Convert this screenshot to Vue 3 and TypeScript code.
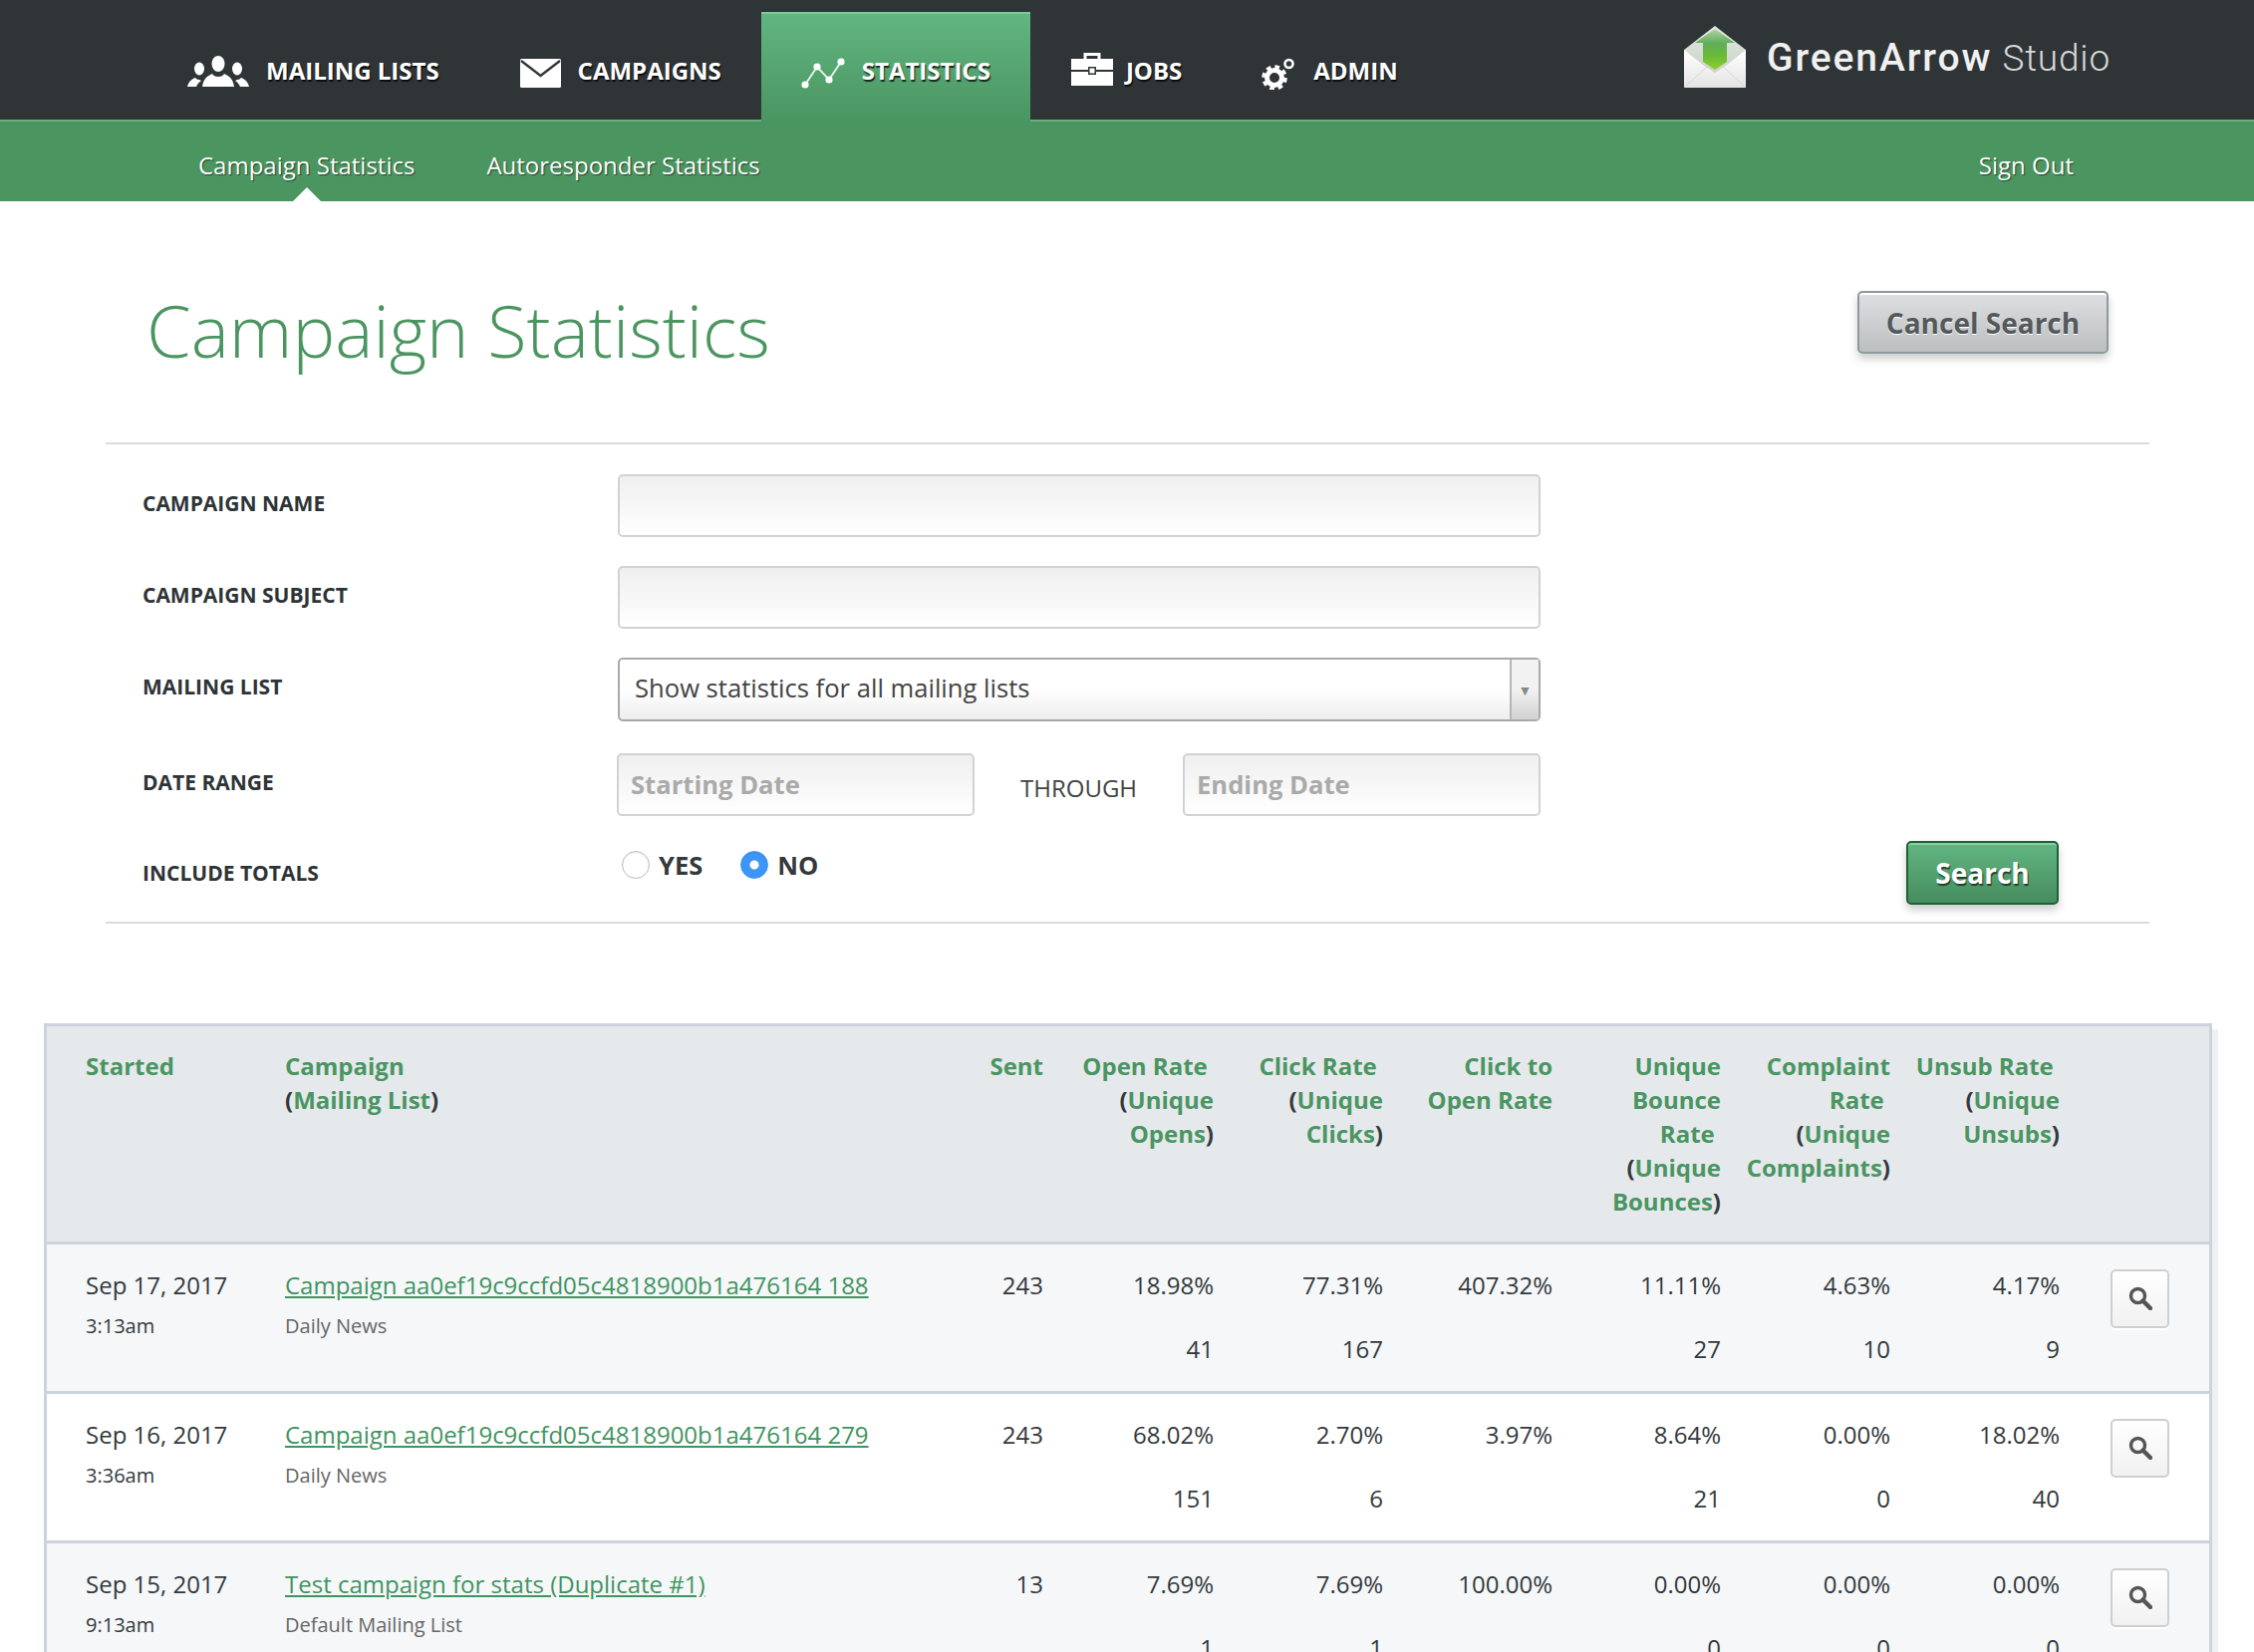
<script setup lang="ts">
interface Row {
  date: string; time: string; name: string; list: string; sent: string;
  rates: { pct: string; num: string }[];
}
const navItems = [
  { label: 'MAILING LISTS', icon: 'people', active: false },
  { label: 'CAMPAIGNS', icon: 'mail', active: false },
  { label: 'STATISTICS', icon: 'stats', active: true },
  { label: 'JOBS', icon: 'jobs', active: false },
  { label: 'ADMIN', icon: 'gear', active: false },
];
const rows: Row[] = [
  { date: 'Sep 17, 2017', time: '3:13am', name: 'Campaign aa0ef19c9ccfd05c4818900b1a476164 188', list: 'Daily News', sent: '243',
    rates: [{ pct: '18.98%', num: '41' }, { pct: '77.31%', num: '167' }, { pct: '407.32%', num: '' }, { pct: '11.11%', num: '27' }, { pct: '4.63%', num: '10' }, { pct: '4.17%', num: '9' }] },
  { date: 'Sep 16, 2017', time: '3:36am', name: 'Campaign aa0ef19c9ccfd05c4818900b1a476164 279', list: 'Daily News', sent: '243',
    rates: [{ pct: '68.02%', num: '151' }, { pct: '2.70%', num: '6' }, { pct: '3.97%', num: '' }, { pct: '8.64%', num: '21' }, { pct: '0.00%', num: '0' }, { pct: '18.02%', num: '40' }] },
  { date: 'Sep 15, 2017', time: '9:13am', name: 'Test campaign for stats (Duplicate #1)', list: 'Default Mailing List', sent: '13',
    rates: [{ pct: '7.69%', num: '1' }, { pct: '7.69%', num: '1' }, { pct: '100.00%', num: '' }, { pct: '0.00%', num: '0' }, { pct: '0.00%', num: '0' }, { pct: '0.00%', num: '0' }] },
];
</script>

<template>
  <div class="page">
    <header class="topbar">
      <nav class="mainnav">
        <a v-for="item in navItems" :key="item.label" class="navitem" :class="{ active: item.active }">
          <svg v-if="item.icon === 'people'" class="ico people" viewBox="0 0 62 32" fill="#fff">
            <ellipse cx="31" cy="8" rx="6.500" ry="8" />
            <path d="M15 31c1-6 3-10 10-13 1 2 3 3 6 3s5-1 6-3c7 3 9 7 10 13z" />
            <ellipse cx="12" cy="13" rx="5" ry="6.500" />
            <path d="M0 31c1-4 3-7 8-9 1 1 2 2 4 2l2 1c-3 2-4 4-5 6z" />
            <ellipse cx="50" cy="13" rx="5" ry="6.500" />
            <path d="M62 31c-1-4-3-7-8-9-1 1-2 2-4 2l-2 1c3 2 4 4 5 6z" />
          </svg>
          <svg v-else-if="item.icon === 'mail'" class="ico mail" viewBox="0 0 41 29">
            <rect x="0" y="0" width="41" height="29" rx="1.5" fill="#fff" />
            <path d="M1 2l19.5 15L40 2" fill="none" stroke="#30353a" stroke-width="2.4" />
          </svg>
          <svg v-else-if="item.icon === 'stats'" class="ico stats" viewBox="0 0 45 33" fill="#fff">
            <path d="M4 28L16 10l12 13L42 2" fill="none" stroke="#fff" stroke-opacity=".85" stroke-width="2" />
            <circle cx="4" cy="28" r="3.6" />
            <circle cx="16" cy="10" r="3.6" />
            <circle cx="28" cy="23" r="3.6" />
            <circle cx="40" cy="5" r="3.6" />
          </svg>
          <svg v-else-if="item.icon === 'jobs'" class="ico jobs" viewBox="0 0 42 33">
            <path d="M14 7V1.500h14V7" fill="none" stroke="#fff" stroke-width="3" />
            <path d="M0 6h42v11H25v-3h-8v3H0zM0 19h17v3h8v-3h17v14H0z" fill="#fff" />
            <rect x="18.500" y="15.500" width="5" height="5" fill="#fff" />
          </svg>
          <svg v-else class="ico gear" viewBox="0 0 34 32" fill="none" stroke="#fff">
            <circle cx="13" cy="20" r="7.500" stroke-width="5" />
            <circle cx="13" cy="20" r="11" stroke-width="3.500" stroke-dasharray="4.640 4" />
            <circle cx="27.500" cy="6" r="4" stroke-width="2.600" />
          </svg>
          <span class="navlabel">{{ item.label }}</span>
        </a>
      </nav>
      <div class="logo">
        <svg class="logomark" viewBox="0 0 62 62">
          <defs>
            <linearGradient id="flap" x1="0" y1="0" x2="0" y2="1">
              <stop offset="0" stop-color="#e2e8df" />
              <stop offset="1" stop-color="#c2cbbf" />
            </linearGradient>
            <linearGradient id="arrow" x1="0" y1="0" x2="0" y2="1">
              <stop offset="0" stop-color="#b4d2ab" />
              <stop offset=".35" stop-color="#5fae5a" />
              <stop offset=".65" stop-color="#68ba38" />
              <stop offset="1" stop-color="#8fd12c" />
            </linearGradient>
            <linearGradient id="front" x1="0" y1="0" x2="0" y2="1">
              <stop offset="0" stop-color="#ffffff" />
              <stop offset="1" stop-color="#e4e4e4" />
            </linearGradient>
          </defs>
          <path d="M31 0L62 24v38H0V24z" fill="url(#flap)" />
          <path d="M31 3L11 17h8v19l12 8 12-8V17h8z" fill="url(#arrow)" />
          <path d="M0 24l19 15 12 8 12-8 19-15v38H0z" fill="url(#front)" />
          <path d="M0 62l23-21M62 62L39 41" stroke="#d6d6d6" stroke-width="1" />
        </svg>
        <span class="logotext"><b>GreenArrow</b> <i>Studio</i></span>
      </div>
    </header>

    <div class="subnav">
      <a class="sublink current">Campaign Statistics</a>
      <a class="sublink">Autoresponder Statistics</a>
      <a class="sublink signout">Sign Out</a>
    </div>

    <div class="titlebar">
      <h1>Campaign Statistics</h1>
      <button class="btn-grey" type="button">Cancel Search</button>
    </div>

    <form class="form" @submit.prevent>
      <div class="frow r1">
        <label>CAMPAIGN NAME</label>
        <input class="field wide" type="text" />
      </div>
      <div class="frow r2">
        <label>CAMPAIGN SUBJECT</label>
        <input class="field wide" type="text" />
      </div>
      <div class="frow r3">
        <label>MAILING LIST</label>
        <div class="selectbox">
          <span>Show statistics for all mailing lists</span>
          <i class="selarrow">▼</i>
        </div>
      </div>
      <div class="frow r4">
        <label>DATE RANGE</label>
        <input class="field date" type="text" placeholder="Starting Date" />
        <span class="through">THROUGH</span>
        <input class="field date end" type="text" placeholder="Ending Date" />
      </div>
      <div class="frow r5">
        <label>INCLUDE TOTALS</label>
        <div class="radios">
          <input type="radio" name="totals" />
          <span>YES</span>
          <input type="radio" name="totals" checked />
          <span>NO</span>
        </div>
        <button class="btn-green" type="submit">Search</button>
      </div>
    </form>

    <div class="tablewrap">
      <table>
        <colgroup>
          <col class="c1" /><col class="c2" /><col class="c3" /><col class="c4" /><col class="c5" />
          <col class="c5" /><col class="c7" /><col class="c5" /><col class="c5" /><col class="c10" />
        </colgroup>
        <thead>
          <tr>
            <th class="first"><a>Started</a></th>
            <th><a>Campaign</a><br />(<a>Mailing List</a>)</th>
            <th class="num"><a>Sent</a></th>
            <th class="num"><a>Open Rate</a>&nbsp;<br />(<a>Unique<br />Opens</a>)</th>
            <th class="num"><a>Click Rate</a>&nbsp;<br />(<a>Unique<br />Clicks</a>)</th>
            <th class="num"><a>Click to<br />Open Rate</a></th>
            <th class="num"><a>Unique<br />Bounce<br />Rate</a>&nbsp;<br />(<a>Unique<br />Bounces</a>)</th>
            <th class="num"><a>Complaint<br />Rate</a>&nbsp;<br />(<a>Unique<br />Complaints</a>)</th>
            <th class="num"><a>Unsub Rate</a>&nbsp;<br />(<a>Unique<br />Unsubs</a>)</th>
            <th></th>
          </tr>
        </thead>
        <tbody>
          <tr v-for="row in rows" :key="row.name">
            <td class="first">
              <div>{{ row.date }}</div>
              <div class="small">{{ row.time }}</div>
            </td>
            <td>
              <div><a class="camp">{{ row.name }}</a></div>
              <div class="small muted">{{ row.list }}</div>
            </td>
            <td class="num">{{ row.sent }}</td>
            <td v-for="(r, i) in row.rates" :key="i" class="num">
              <div>{{ r.pct }}</div>
              <div v-if="r.num" class="count">{{ r.num }}</div>
            </td>
            <td class="act">
              <button class="lens" type="button" aria-label="View">
                <svg viewBox="0 0 24 24" width="24" height="24" fill="none" stroke="#555">
                  <circle cx="9.500" cy="9.500" r="7" stroke-width="3.400" />
                  <path d="M14.500 14.500L22 22" stroke-width="4.400" stroke-linecap="round" />
                </svg>
              </button>
            </td>
          </tr>
        </tbody>
      </table>
    </div>
  </div>
</template>

<style>
html, body { margin: 0; background: #fff; }
</style>

<style scoped>
.page {
  height: 100vh;
  overflow: hidden;
  font-family: "Open Sans", "Liberation Sans", sans-serif;
  font-size: 24px;
  color: #33393c;
  background: #fff;
}
.topbar {
  height: 120px;
  background: #2f3437;
  display: flex;
  justify-content: space-between;
  position: relative;
  z-index: 1;
}
.mainnav {
  display: flex;
  padding: 12px 0 0 148px;
}
.navitem {
  height: 110px;
  padding: 10px 40px 0;
  display: flex;
  align-items: center;
  box-sizing: border-box;
  color: #fff;
  font-weight: 700;
  font-size: 24px;
  text-shadow: 1px 2px 1px rgba(0, 0, 0, .75);
}
.navlabel { margin-top: -4px; }
.navitem.active {
  background: linear-gradient(#62b681, #4a9561);
  box-shadow: inset 0 2px 0 #82c89b;
}
.ico { flex: none; }
.people { width: 62px; height: 32px; margin-right: 17px; }
.mail { width: 41px; height: 29px; margin: 3px 17px 0 1px; }
.stats { width: 45px; height: 33px; margin: 3px 16px 0 0; }
.jobs { width: 42px; height: 33px; margin: -5px 13px 0 1px; }
.gear { width: 34px; height: 32px; margin: 3px 18px 0 0; }
.logo {
  display: flex;
  align-items: flex-start;
  padding: 26px 144px 0 0;
}
.logomark { width: 62px; height: 62px; margin-right: 21px; }
.logotext {
  font-family: Roboto, "Liberation Sans", sans-serif;
  font-size: 37px;
  line-height: 44px;
  margin-top: 10px;
  color: #f0f0f0;
  white-space: nowrap;
  letter-spacing: .8px;
}
.logotext b { font-weight: 500; font-size: 39px; letter-spacing: 1.9px; }
.logotext i { font-style: normal; font-weight: 300; color: #d8d8d8; }

.subnav {
  height: 82px;
  box-sizing: border-box;
  border-top: 2px solid #6dac84;
  background: #4b9560;
  display: flex;
  align-items: center;
  padding: 0 181px 0 199px;
  gap: 72px;
  color: #fff;
  text-shadow: 1px 1px 1px rgba(0, 0, 0, .55);
}
.sublink { position: relative; line-height: 34px; margin-top: 8px; }
.sublink.current::after {
  content: "";
  position: absolute;
  left: 50%;
  margin-left: -14px;
  bottom: -19px;
  border: solid transparent;
  border-width: 0 14px 14px;
  border-bottom-color: #fff;
}
.signout { margin-left: auto; }

.titlebar {
  display: flex;
  justify-content: space-between;
  align-items: flex-start;
  height: 242px;
  padding: 90px 146px 0 147px;
  box-sizing: border-box;
}
h1 {
  margin: -3px 0 0;
  font-size: 72px;
  line-height: 84px;
  font-weight: 300;
  color: #4b9560;
}
.btn-grey {
  width: 252px;
  height: 63px;
  border: 2px solid #8d9a9e;
  border-radius: 5px;
  background: linear-gradient(#dedfe2, #bcbfc0);
  box-shadow: inset 0 2px 0 #fff, 0 5px 8px rgba(0, 0, 0, .2);
  font: 700 28px "Open Sans", sans-serif;
  color: #54595c;
  text-shadow: 0 1px 0 #fff;
  padding: 0;
}
.form {
  margin: 0 105px 0 106px;
  border-top: 2px solid #dcdcdc;
  border-bottom: 2px solid #dcdcdc;
  padding: 30px 0 18px;
}
.frow {
  display: flex;
  align-items: center;
  height: 63px;
  position: relative;
}
.r2 { margin-top: 29px; }
.r3 { margin-top: 29px; height: 64px; }
.r4 { margin-top: 32px; }
.r5 { margin-top: 25px; }
label {
  width: 514px;
  flex: none;
  padding-left: 37px;
  box-sizing: border-box;
  font-size: 21px;
  font-weight: 700;
  color: #2e3436;
  margin-top: -6px;
}
.r5 label { margin-top: 0; }
.field {
  height: 63px;
  box-sizing: border-box;
  border: 2px solid #d2d2d2;
  border-radius: 5px;
  background: linear-gradient(#efefef, #fff);
  padding: 0 12px;
  font: 700 25.600px "Open Sans", sans-serif;
  margin: 0;
  outline: none;
}
.field::placeholder { color: #aaa; opacity: 1; }
.wide { width: 926px; }
.date { width: 359px; margin-left: -1px; }
.end { width: 359px; margin-left: 0; }
.through { width: 209px; padding-left: 46px; box-sizing: border-box; color: #444; line-height: 34px; margin-top: 6px; }
.selectbox {
  width: 926px;
  height: 64px;
  box-sizing: border-box;
  border: 2px solid #a9a9a9;
  border-radius: 5px;
  background: linear-gradient(#fff 50%, #eee);
  display: flex;
  align-items: center;
  padding-left: 15px;
  font-size: 25.600px;
  color: #444;
  position: relative;
}
.selectbox > span { margin-top: -3px; }
.selarrow {
  position: absolute;
  right: 0;
  top: 0;
  bottom: 0;
  width: 27px;
  border-left: 2px solid #b5b5b5;
  background: linear-gradient(#f2f2f2 50%, #d2d2d2);
  color: #888;
  font-style: normal;
  font-size: 14px;
  display: flex;
  align-items: center;
  justify-content: center;
}
.radios {
  display: flex;
  align-items: center;
  font-size: 25.500px;
  font-weight: 700;
  margin-top: -16px;
  margin-left: 4px;
}
.radios input {
  appearance: none;
  -webkit-appearance: none;
  width: 28px;
  height: 28px;
  margin: 0 9px 0 0;
  box-sizing: border-box;
  border: 1px solid #bbb;
  border-radius: 50%;
  background: #fff;
  box-shadow: inset 0 1px 2px rgba(0, 0, 0, .08);
}
.radios input:checked {
  border-color: #3d96f7;
  background: radial-gradient(circle, #fff 0 4px, #3d96f7 5px);
}
.radios span { margin-right: 38px; }
.btn-green {
  position: absolute;
  right: 91px;
  top: 0;
  width: 153px;
  height: 64px;
  border: 2px solid #1f6036;
  border-radius: 5px;
  background: linear-gradient(#62b681, #468c5e);
  box-shadow: inset 0 2px 0 #8bd0a4, 0 5px 8px rgba(0, 0, 0, .2);
  font: 700 28px "Open Sans", sans-serif;
  color: #fff;
  text-shadow: 1px 2px 1px rgba(0, 0, 0, .6);
  padding: 0;
}
.tablewrap {
  margin: 100px 42px 0 44px;
  border: 3px solid #ccd3dc;
  box-shadow: 6px 6px 0 #eef0f2;
}
table {
  width: 2170px;
  table-layout: fixed;
  border-collapse: collapse;
}
.c1 { width: 239px; }
.c2 { width: 640px; }
.c3 { width: 121px; }
.c4 { width: 171px; }
.c5 { width: 170px; }
.c7 { width: 169px; }
.c10 { width: 150px; }
th {
  padding: 23px 0 0;
  height: 217px;
  box-sizing: border-box;
  vertical-align: top;
  text-align: left;
  background: #e6e9ec;
  font-size: 24px;
  font-weight: 700;
  line-height: 34px;
  white-space: nowrap;
  border-bottom: 3px solid #ccd3dc;
}
th a { color: #4a9562; }
th.first, td.first { padding-left: 39px; }
td {
  padding: 24px 0 0;
  height: 150px;
  box-sizing: border-box;
  vertical-align: top;
  line-height: 34px;
  border-bottom: 3px solid #ccd3dc;
  white-space: nowrap;
}
tbody tr:nth-child(odd) td { background: #f5f7f9; }
tbody tr:nth-child(even) td { background: #fff; }
th.num, td.num { text-align: right; }
.small { font-size: 20px; margin-top: 7px; }
.muted { color: #666; }
.count { margin-top: 30px; }
.camp { color: #3f9460; text-decoration: underline; }
td.act { padding-left: 51px; padding-top: 25px; }
.lens {
  width: 59px;
  height: 59px;
  padding: 0;
  border: 2px solid #cfcfcf;
  border-radius: 5px;
  background: linear-gradient(#fff, #f1f1f1);
  box-shadow: 0 2px 0 #fff;
  display: flex;
  align-items: center;
  justify-content: center;
}
</style>
